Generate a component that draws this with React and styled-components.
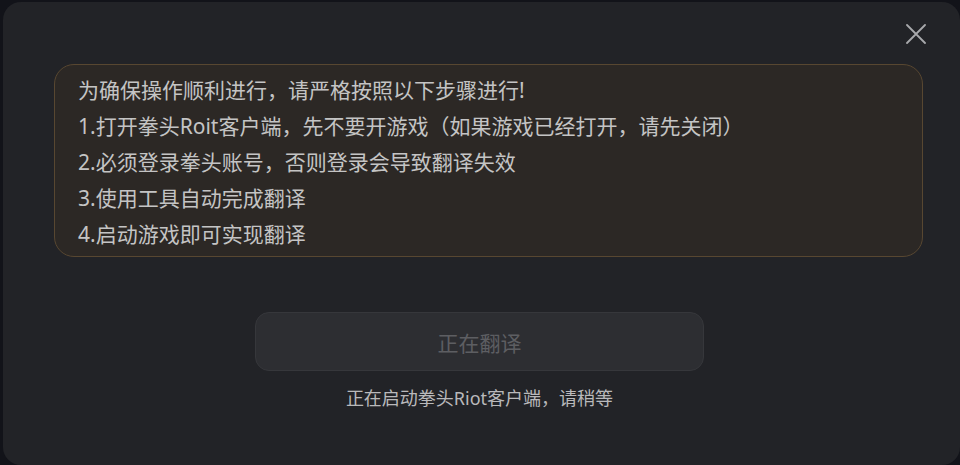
import React from "react";
import styled, { createGlobalStyle } from "styled-components";

const GlobalStyle = createGlobalStyle`
  html, body {
    margin: 0;
    padding: 0;
    background: #121319;
  }
  body {
    font-family: "Noto Sans", "Noto Sans CJK SC", sans-serif;
  }
`;

const steps = [
  "为确保操作顺利进行，请严格按照以下步骤进行!",
  "1.打开拳头Roit客户端，先不要开游戏（如果游戏已经打开，请先关闭）",
  "2.必须登录拳头账号，否则登录会导致翻译失效",
  "3.使用工具自动完成翻译",
  "4.启动游戏即可实现翻译",
];

const App = () => {
  return (
    <>
      <GlobalStyle />
      <Modal>
        <CloseButton aria-label="关闭">
          <svg width="20" height="20" viewBox="0 0 20 20">
            <path
              d="M1 1 L19 19 M19 1 L1 19"
              stroke="#a8a9ac"
              strokeWidth="1.8"
              strokeLinecap="round"
            />
          </svg>
        </CloseButton>
        <Notice>
          {steps.map((s) => (
            <NoticeLine key={s}>{s}</NoticeLine>
          ))}
        </Notice>
        <Footer>
          <TranslateButton disabled>正在翻译</TranslateButton>
          <Status>正在启动拳头Riot客户端，请稍等</Status>
        </Footer>
      </Modal>
    </>
  );
};

export default App;

const Modal = styled.div`
  position: relative;
  box-sizing: border-box;
  margin: 2px 0 0 3px;
  width: 957px;
  height: 463px;
  border-radius: 18px;
  background: #222327;
  padding-top: 62px;
  display: flex;
  flex-direction: column;
`;

const CloseButton = styled.button`
  position: absolute;
  top: 19px;
  right: 31px;
  width: 26px;
  height: 26px;
  padding: 0;
  border: none;
  background: transparent;
  display: flex;
  align-items: center;
  justify-content: center;
  cursor: pointer;
`;

const Notice = styled.div`
  margin: 0 37px 0 51px;
  padding: 7px 23px 4px;
  border: 1px solid #584731;
  border-radius: 20px;
  background: #2c2825;
  color: #c4c4c4;
  font-size: 21px;
  line-height: 36px;
`;

const NoticeLine = styled.div`
  white-space: nowrap;
`;

const Footer = styled.div`
  display: flex;
  flex-direction: column;
  align-items: center;
  margin-top: 55px;
  padding-right: 4px;
`;

const TranslateButton = styled.button`
  box-sizing: border-box;
  width: 449px;
  height: 59px;
  border-radius: 14px;
  border: 1px solid #36373b;
  background: #2d2e32;
  color: #5d5e62;
  font-family: "Noto Sans", "Noto Sans CJK SC", sans-serif;
  font-size: 21px;
`;

const Status = styled.div`
  margin-top: 14px;
  color: #b9b9bb;
  font-size: 18px;
  line-height: 26px;
`;
